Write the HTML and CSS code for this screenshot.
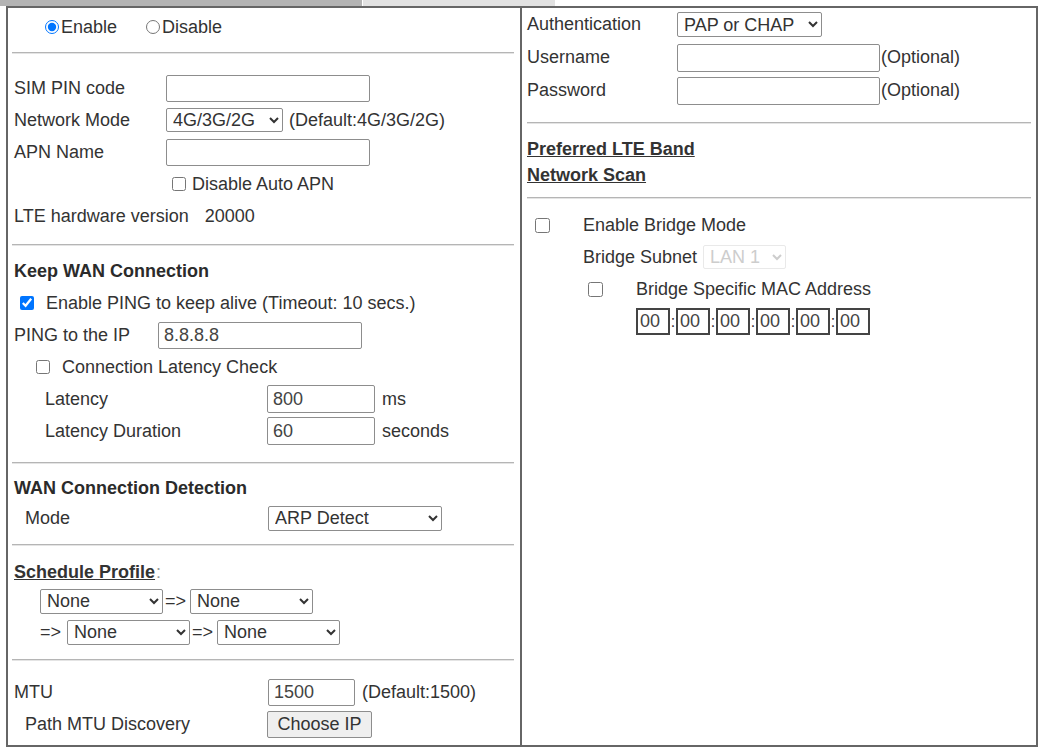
FILE: index.html
```html
<!DOCTYPE html>
<html>
<head>
	<title>WAN - LTE</title>

	<link rel="stylesheet" href="styles.css">
</head>
<body>
	<div class="tabs">
		<span class="tab tab-active"></span>
		<span class="tab tab-idle"></span>
	</div>

	<div class="frame">
		<div class="col col-left">

			<div class="sec sec-mode">
				<div class="row row-radio">
					<label class="choice"><input type="radio" name="enable" checked> Enable</label>
					<label class="choice choice-off"><input type="radio" name="enable"> Disable</label>
				</div>
			</div>
			<hr>

			<div class="sec sec-sim">
				<div class="row">
					<span class="lab lab-sim">SIM PIN code</span>
					<input type="text" class="txt txt-long">
				</div>
				<div class="row">
					<span class="lab lab-sim">Network Mode</span>
					<select class="sel sel-net"><option>4G/3G/2G</option></select>
					<span class="note">(Default:4G/3G/2G)</span>
				</div>
				<div class="row">
					<span class="lab lab-sim">APN Name</span>
					<input type="text" class="txt txt-long">
				</div>
				<div class="row row-apn">
					<label class="choice"><input type="checkbox" class="box"> Disable Auto APN</label>
				</div>
				<div class="row">
					<span>LTE hardware version</span>
					<span class="hw-value">20000</span>
				</div>
			</div>
			<hr>

			<div class="sec sec-keep">
				<div class="row">
					<b>Keep WAN Connection</b>
				</div>
				<div class="row row-ping">
					<label class="choice choice-wide"><input type="checkbox" class="box" checked> Enable PING to keep alive (Timeout: 10 secs.)</label>
				</div>
				<div class="row">
					<span class="lab lab-ping">PING to the IP</span>
					<input type="text" class="txt txt-long" value="8.8.8.8">
				</div>
				<div class="row row-latency">
					<label class="choice choice-wide"><input type="checkbox" class="box"> Connection Latency Check</label>
				</div>
				<div class="row indent-2">
					<span class="lab lab-latency">Latency</span>
					<input type="text" class="txt txt-mid" value="800">
					<span class="unit">ms</span>
				</div>
				<div class="row indent-2">
					<span class="lab lab-latency">Latency Duration</span>
					<input type="text" class="txt txt-mid" value="60">
					<span class="unit">seconds</span>
				</div>
			</div>
			<hr>

			<div class="sec sec-detect">
				<div class="row">
					<b>WAN Connection Detection</b>
				</div>
				<div class="row row-short indent-1">
					<span class="lab lab-mode">Mode</span>
					<select class="sel sel-detect"><option>ARP Detect</option></select>
				</div>
			</div>
			<hr>

			<div class="sec sec-schedule">
				<div class="row row-30">
					<a class="link">Schedule Profile</a><span class="colon">:</span>
				</div>
				<div class="row row-short row-sched">
					<select class="sel sel-sched"><option>None</option></select>
					<span class="arrow">=&gt;</span>
					<select class="sel sel-sched"><option>None</option></select>
				</div>
				<div class="row row-34 row-sched">
					<span class="arrow arrow-first">=&gt;</span>
					<select class="sel sel-sched"><option>None</option></select>
					<span class="arrow">=&gt;</span>
					<select class="sel sel-sched"><option>None</option></select>
				</div>
			</div>
			<hr>

			<div class="sec sec-mtu">
				<div class="row">
					<span class="lab lab-mtu">MTU</span>
					<input type="text" class="txt txt-short" value="1500">
					<span class="unit">(Default:1500)</span>
				</div>
				<div class="row indent-1">
					<span class="lab lab-path">Path MTU Discovery</span>
					<button class="btn">Choose IP</button>
				</div>
			</div>
		</div>

		<div class="col col-right">
			<div class="sec sec-auth">
				<div class="row row-33">
					<span class="lab lab-auth">Authentication</span>
					<select class="sel sel-auth"><option>PAP or CHAP</option></select>
				</div>
				<div class="row row-33">
					<span class="lab lab-auth">Username</span>
					<input type="text" class="txt txt-user">
					<span class="optional">(Optional)</span>
				</div>
				<div class="row row-33">
					<span class="lab lab-auth">Password</span>
					<input type="password" class="txt txt-user">
					<span class="optional">(Optional)</span>
				</div>
			</div>
			<hr>

			<div class="sec sec-links">
				<div class="row row-26"><a class="link">Preferred LTE Band</a></div>
				<div class="row row-26"><a class="link">Network Scan</a></div>
			</div>
			<hr>

			<div class="sec sec-bridge">
				<div class="row row-bridge">
					<input type="checkbox" class="box box-light">
					<span>Enable Bridge Mode</span>
				</div>
				<div class="row row-subnet">
					<span>Bridge Subnet</span>
					<select class="sel sel-lan" disabled><option>LAN 1</option></select>
				</div>
				<div class="row row-mac-check">
					<input type="checkbox" class="box box-light">
					<span>Bridge Specific MAC Address</span>
				</div>
				<div class="row row-mac">
					<input type="text" class="mac" value="00"><span class="sep">:</span>
					<input type="text" class="mac" value="00"><span class="sep">:</span>
					<input type="text" class="mac" value="00"><span class="sep">:</span>
					<input type="text" class="mac" value="00"><span class="sep">:</span>
					<input type="text" class="mac" value="00"><span class="sep">:</span>
					<input type="text" class="mac" value="00">
				</div>
			</div>
		</div>
	</div>
</body>
</html>
```

FILE: styles.css
```css
body {
	margin: 0;
	font-family: "Liberation Sans", Arial, sans-serif;
	font-size: 18px;
	color: #333;
	background: #fff;
}

.tabs {
	display: flex;
	height: 6px;
}
.tab-active {
	width: 362px;
	background-color: #b4b4b4;
}
.tab-idle {
	width: 192px;
	margin-left: 1px;
	background-color: #e2e2e2;
}

.frame {
	display: grid;
	grid-template-columns: 514px 1fr;
	width: 1032px;
	margin-left: 6px;
	box-sizing: border-box;
	border: 2px solid #666;
}
.col-left {
	border-right: 2px solid #666;
}

hr {
	height: 0;
	margin: 0 6px 0 4px;
	border: 0;
	border-top: 1px solid #b5b5b5;
	border-bottom: 1px solid #e4e4e4;
}
.col-right hr {
	margin: 0 5px;
}

.row {
	display: flex;
	align-items: center;
	height: 32px;
	padding-left: 6px;
	white-space: nowrap;
}
.col-right .row {
	padding-left: 5px;
}
.row-short { height: 28px; }
.row-30 { height: 30px; }
.row-34 { height: 34px; }
.row-33 { height: 33px; }
.row-26 { height: 26px; }
.indent-1 { padding-left: 17px; }
.indent-2 { padding-left: 37px; }

/* section spacing, one per block between the rules */
.sec-mode { padding-bottom: 6px; }
.sec-sim { padding: 18px 0 12px; }
.sec-keep { padding: 9px 0 15px; }
.sec-detect { padding: 8px 0 12px; }
.sec-schedule { padding: 11px 0 10px; }
.sec-mtu { padding: 15px 0 5px; }
.sec-auth { padding-bottom: 15px; }
.sec-links { padding: 12px 0 9px; }
.sec-bridge { padding-top: 10px; }

.row-radio {
	height: 38px;
	padding-left: 37px;
}

.lab { display: inline-block; flex: none; }
.lab-sim { width: 152px; }
.lab-ping { width: 144px; }
.lab-latency { width: 222px; }
.lab-mode { width: 243px; }
.lab-mtu { width: 254px; }
.lab-path { width: 242px; }
.lab-auth { width: 150px; }

.choice {
	display: inline-flex;
	align-items: center;
}
.choice-off { margin-left: 29px; }
.choice input[type=radio] {
	width: 14px;
	height: 14px;
	margin: 0 2px 0 0;
}
.box {
	width: 14px;
	height: 14px;
	margin: 0 6px 0 0;
}
.choice-wide .box { margin-right: 12px; }

.row-apn { padding-left: 164px; }
.row-ping { padding-left: 12px; }
.row-latency { padding-left: 28px; }
.hw-value { margin-left: 16px; }

.txt {
	box-sizing: border-box;
	height: 27px;
	padding: 0 5px;
	font: inherit;
	color: #444;
	border: 1px solid #8d8d8d;
	border-radius: 2px;
	background: #fff;
}
.txt-long { width: 204px; }
.txt-mid { width: 108px; height: 28px; }
.txt-short { width: 87px; }
.txt-user { width: 203px; height: 28px; }

.sel {
	box-sizing: border-box;
	height: 25px;
	padding: 0 2px;
	font: inherit;
	color: #333;
	border: 1px solid #8d8d8d;
	border-radius: 2px;
	background: #fff;
}
.sel-net { width: 117px; height: 24px; }
.sel-detect { width: 174px; }
.sel-sched { width: 123px; }
.sel-auth { width: 145px; }
.sel-lan {
	width: 83px;
	height: 24px;
	margin-left: 6px;
	color: #b8b8b8;
	border-color: #e0e0e0;
}

.note { margin-left: 6px; }
.unit { margin-left: 7px; }
.optional { margin-left: 1px; }

b { font-weight: bold; color: #2b2b2b; }

.link {
	font-weight: bold;
	color: #333;
	text-decoration: underline;
}
.colon { color: #999; margin-left: 1px; }

.row-sched { padding-left: 32px; }
.arrow { margin: 0 4px 0 2px; }
.arrow-first { margin: 0 6px 0 0; }

.btn {
	box-sizing: border-box;
	width: 105px;
	height: 27px;
	font: inherit;
	color: #333;
	background: #efefef;
	border: 1px solid #8d8d8d;
	border-radius: 2px;
}

.col-right .row-bridge { padding-left: 13px; }
.col-right .row-subnet { padding-left: 61px; }
.col-right .row-mac-check { padding-left: 66px; }
.col-right .row-mac { height: 33px; padding-left: 114px; }
.box-light {
	width: 15px;
	height: 15px;
	margin-right: 33px;
}

.mac {
	box-sizing: border-box;
	width: 34px;
	height: 27px;
	padding: 0 2px;
	font: inherit;
	color: #444;
	border: 2px solid #444;
	border-radius: 0;
}
.sep {
	width: 6px;
	text-align: center;
	font-size: 16px;
}
```
